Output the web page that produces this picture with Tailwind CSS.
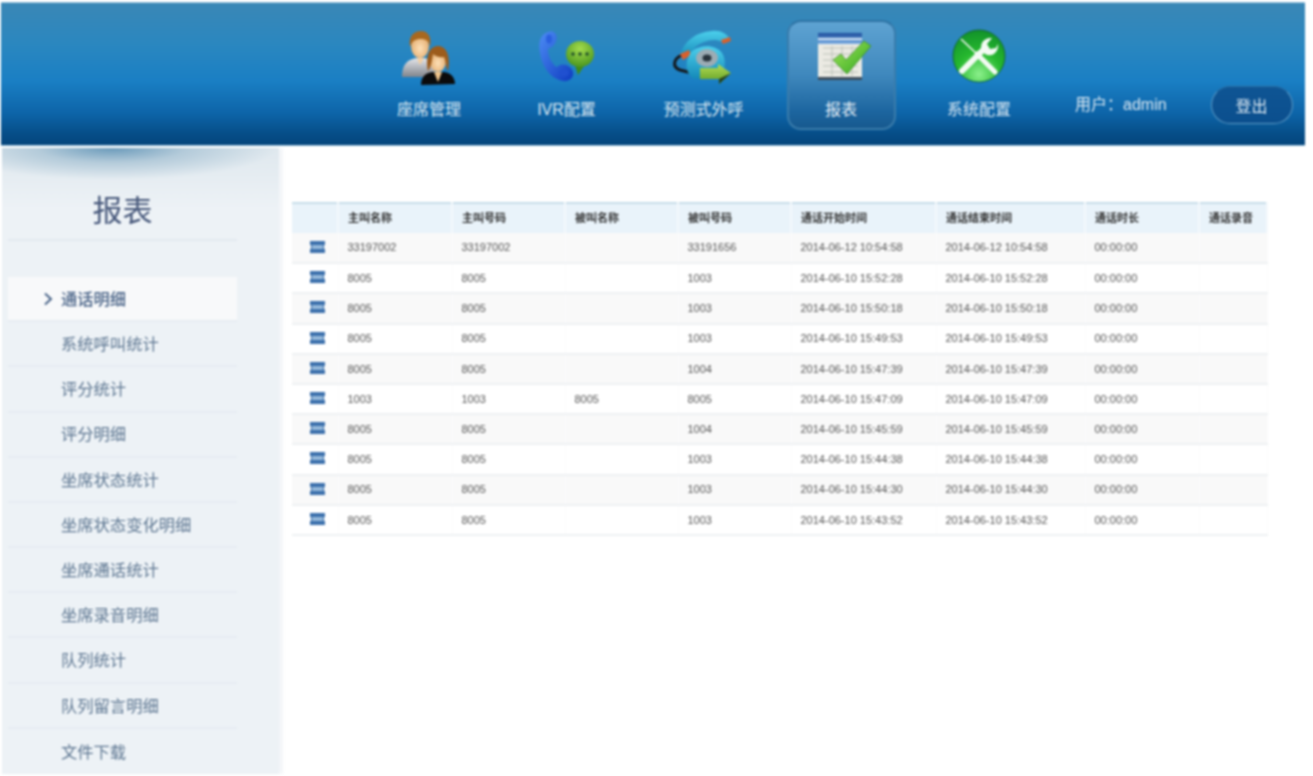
<!DOCTYPE html>
<html lang="zh-CN">
<head>
    <meta charset="UTF-8">
    <meta name="viewport" content="width=device-width, initial-scale=1.0">
    <title>报表</title>
    <script src="https://cdn.jsdelivr.net/npm/@tailwindcss/browser@4"></script>
</head>
<body class="bg-white font-['Liberation_Sans','Noto_Sans_CJK_SC',sans-serif] overflow-hidden">
<div class="w-[1313px] h-[776px] pt-[2px] overflow-hidden blur-[0.8px]">

    <!-- Header -->
    <header class="ml-[1px] w-[1304px] h-[144px] flex pl-[359px] pt-[15px] border-y border-[#9cc4dc] bg-[linear-gradient(to_bottom,#3a87b6_0%,#2a87c0_30%,#1a7fc4_55%,#0d64a8_78%,#064e88_92%,#05457c_100%)] text-[#dbe8f2]">
        <nav class="flex">
            <a class="w-[138px] flex justify-center">
                <div class="w-[108px] h-[110px] flex flex-col items-center pt-[11px]">
                    <svg width="60" height="56" viewBox="0 0 60 56">
                        <defs>
                            <linearGradient id="silver" x1="0" y1="0" x2="0" y2="1"><stop offset="0" stop-color="#e4e6ea"/><stop offset="1" stop-color="#80848c"/></linearGradient>
                            <radialGradient id="skin" cx=".5" cy=".6" r=".6"><stop offset="0" stop-color="#fde0b8"/><stop offset="1" stop-color="#e2a868"/></radialGradient>
                        </defs>
                        <path d="M3 48 C3 34 10 30 18 29 L25 29 C32 30 36 34 36 48 Z" fill="url(#silver)"/>
                        <path d="M18 29 L21 36 L25 29 Z" fill="#f4cfa0"/>
                        <ellipse cx="21" cy="17" rx="9" ry="12" fill="url(#skin)"/>
                        <path d="M11 18 C9 6 16 2 22 2 C29 2 33 8 31 18 C30 12 27 10 22 10 C16 10 13 12 11 18 Z" fill="#a8681f"/>
                        <path d="M22 56 C22 46 29 43 34 43 L44 43 C50 43 56 47 56 55 Z" fill="#0b0b0c"/>
                        <path d="M35 43 L39 53 L43 43 Z" fill="#f0c48c"/>
                        <ellipse cx="39" cy="32" rx="8" ry="11" fill="url(#skin)"/>
                        <path d="M29 42 C26 26 31 17 39 17 C47 17 52 26 49 42 C47 40 47 32 45 28 C41 29 36 27 34 25 C33 31 32 39 29 42 Z" fill="#9c5c1c"/>
                    </svg>
                    <span class="mt-[13px] text-[16px] leading-[24px]">座席管理</span>
                </div>
            </a>
            <a class="w-[137px] flex justify-center">
                <div class="w-[108px] h-[110px] flex flex-col items-center pt-[11px]">
                    <svg width="60" height="56" viewBox="0 0 60 56">
                        <defs>
                            <linearGradient id="handset" x1="0" y1="0" x2="1" y2="1"><stop offset="0" stop-color="#4c8cf4"/><stop offset="1" stop-color="#0f3cc0"/></linearGradient>
                            <radialGradient id="bubble" cx=".5" cy=".3" r=".8"><stop offset="0" stop-color="#a4dc4c"/><stop offset="1" stop-color="#3e8c18"/></radialGradient>
                        </defs>
                        <path d="M11 3 C3 5 1 14 3 24 C5 38 14 50 26 52 C33 53 37 48 36 43 C35 38 28 34 23 36 C21 37 20 39 18 37 C14 33 11 26 11 21 C11 19 14 19 16 17 C20 13 21 7 18 4 C16 2 13 2 11 3 Z" fill="url(#handset)"/>
                        <ellipse cx="27" cy="44" rx="5" ry="3.5" fill="#2050d0"/>
                        <ellipse cx="12" cy="10" rx="3" ry="4.5" fill="#2a60e0"/>
                        <path d="M38 36 L41 46 L47 37 Z" fill="#3e8c18"/>
                        <ellipse cx="43" cy="25" rx="14" ry="13" fill="url(#bubble)"/>
                        <circle cx="36" cy="25" r="1.7" fill="#1e4c28"/>
                        <circle cx="43" cy="25" r="1.7" fill="#1e4c28"/>
                        <circle cx="50" cy="25" r="1.7" fill="#1e4c28"/>
                    </svg>
                    <span class="mt-[13px] text-[16px] leading-[24px]">IVR配置</span>
                </div>
            </a>
            <a class="w-[137px] flex justify-center">
                <div class="w-[108px] h-[110px] flex flex-col items-center pt-[11px]">
                    <svg width="64" height="56" viewBox="0 0 64 56">
                        <defs>
                            <linearGradient id="teal" x1="0" y1="0" x2="0" y2="1"><stop offset="0" stop-color="#4cd0ec"/><stop offset="1" stop-color="#1488b8"/></linearGradient>
                            <linearGradient id="arrow" x1="0" y1="0" x2="0" y2="1"><stop offset="0" stop-color="#b4dc54"/><stop offset="1" stop-color="#5c9c24"/></linearGradient>
                        </defs>
                        <path d="M10 26 C1 30 0 38 8 41 L20 44" fill="none" stroke="#14181c" stroke-width="3"/>
                        <path d="M8 26 C12 12 24 3 40 2 C48 1 54 4 58 10 L50 13 C44 10 38 11 32 13 C24 16 19 21 17 29 Z" fill="url(#teal)"/>
                        <path d="M49 11 L58 8 L59 12 L51 15 Z" fill="#d8602c"/>
                        <path d="M8 25 L17 21 L19 26 L11 31 Z" fill="#d8602c"/>
                        <path d="M20 22 C30 15 44 16 50 24 C54 30 54 40 48 48 L22 50 C12 44 13 30 20 22 Z" fill="url(#teal)"/>
                        <ellipse cx="35" cy="29" rx="11" ry="9" fill="#9cacb4"/>
                        <ellipse cx="35" cy="29" rx="4.5" ry="3.5" fill="#28343c"/>
                        <path d="M28 39 L46 39 L46 35 L59 44 L47 55 L47 50 L28 50 Z" fill="url(#arrow)"/>
                        <path d="M59 44 L47 55 L47 50 Z" fill="#24401a"/>
                    </svg>
                    <span class="mt-[13px] text-[16px] leading-[24px]">预测式外呼</span>
                </div>
            </a>
            <a class="w-[138px] flex justify-center">
                <div class="w-[109px] h-[110px] mt-[2px] flex flex-col items-center pt-[8px] rounded-[14px] border-2 border-[#3a7cab] border-t-[#2f73a4] bg-[linear-gradient(to_bottom,#5ea3d2_0%,#3f88bd_50%,#1c659f_85%,#17598f_100%)]">
                    <svg class="ml-[6px]" width="60" height="54" viewBox="0 0 60 54">
                        <defs>
                            <linearGradient id="sheetTop" x1="0" y1="0" x2="0" y2="1"><stop offset="0" stop-color="#1c4c9c"/><stop offset="1" stop-color="#7cb0e4"/></linearGradient>
                            <linearGradient id="check" x1="0" y1="0" x2="1" y2="1"><stop offset="0" stop-color="#a4e85c"/><stop offset="1" stop-color="#2ca41c"/></linearGradient>
                        </defs>
                        <rect x="4" y="3" width="44" height="46" fill="#ebeae3"/>
                        <rect x="4" y="47" width="44" height="3" fill="#3c4c5c"/>
                        <rect x="4" y="3" width="44" height="11" fill="url(#sheetTop)"/>
                        <rect x="4" y="8" width="44" height="2" fill="#d8e8f8"/>
                        <path d="M9 18 H44 M9 24 H44 M9 30 H44 M9 36 H44 M9 42 H44 M18 16 V46 M28 16 V46 M38 16 V46" stroke="#bcc0b8" stroke-width="1"/>
                        <path d="M19 30 L27 24 L32 30 L50 11 L57 16 L33 44 Z" fill="url(#check)" stroke="#3c8c2c" stroke-width=".8"/>
                    </svg>
                    <span class="mt-[14px] text-[16px] leading-[24px] text-[#e6eff6]">报表</span>
                </div>
            </a>
            <a class="w-[138px] flex justify-center">
                <div class="w-[108px] h-[110px] flex flex-col items-center pt-[11px]">
                    <svg width="60" height="56" viewBox="0 0 60 56">
                        <defs>
                            <radialGradient id="ball" cx=".5" cy=".85" r=".85"><stop offset="0" stop-color="#8cf08c"/><stop offset=".5" stop-color="#26b82e"/><stop offset="1" stop-color="#12922a"/></radialGradient>
                        </defs>
                        <circle cx="30" cy="27" r="26" fill="url(#ball)" stroke="#0d5c25" stroke-width=".8"/>
                        <path d="M12 10 L48 44" stroke="#f4fbf4" stroke-width="1.6"/>
                        <path d="M28 25 L46 43" stroke="#f4fbf4" stroke-width="5" stroke-linecap="round"/>
                        <path d="M13 42 L35 20" stroke="#f4fbf4" stroke-width="6" stroke-linecap="round"/>
                        <path d="M33 22 C30 15 35 8 43 9 L38 15 L41 20 L47 19 L49 15 C50 23 43 29 36 25 Z" fill="#f4fbf4"/>
                    </svg>
                    <span class="mt-[13px] text-[16px] leading-[24px]">系统配置</span>
                </div>
            </a>
        </nav>
        <span class="ml-[27px] mt-[75px] h-[24px] text-[16px] leading-[24px] text-[#dbe8f2]">用户：admin</span>
        <button class="ml-[44px] mt-[68px] w-[82px] h-[38px] pt-[4px] rounded-full border border-[#5f9cc6] border-t-[#2a6da2] bg-[linear-gradient(to_bottom,#0f5594,#0b4f8e)] text-[16px] text-[#dbe8f2]">登出</button>
    </header>

    <div class="flex mt-[2px]">
        <!-- Sidebar -->
        <aside class="ml-[2px] w-[277px] h-[626px] flex flex-col shadow-[4px_0_2px_#f4f6f9] bg-[radial-gradient(ellipse_165px_32px_at_110px_0,#6a9aba_0%,#b4cbda_45%,transparent_100%),linear-gradient(to_bottom,#dfe8ee,#edf2f6_60px)]">
            <h2 class="h-[97px] mx-[6px] mr-[42px] flex items-center justify-center pt-[36px] border-b-2 border-[#e2e9f0] text-[30px] leading-none text-[#46577a]">报表</h2>
            <ul class="mt-[36px] ml-[6px] w-[229px] text-[16.3px] text-[#5d7691] [&>li]:h-[45.2px] [&>li]:flex [&>li]:items-center [&>li]:pl-[53px] [&>li]:pt-[1px] [&>li]:border-b-2 [&>li]:border-[#e6ecf2]">
                <li class="relative bg-[#f8f9fa] font-medium text-[#4a6488]">
                    <svg class="absolute left-[35px] top-[15px]" width="10" height="14" viewBox="0 0 10 14"><path d="M2 1.5 L8 7 L2 12.5" fill="none" stroke="#4a6488" stroke-width="2"/></svg>
                    通话明细
                </li>
                <li>系统呼叫统计</li>
                <li>评分统计</li>
                <li>评分明细</li>
                <li>坐席状态统计</li>
                <li>坐席状态变化明细</li>
                <li>坐席通话统计</li>
                <li>坐席录音明细</li>
                <li>队列统计</li>
                <li>队列留言明细</li>
                <li class="border-b-0!">文件下载</li>
            </ul>
        </aside>

        <!-- Report table -->
        <main class="ml-[13px] mt-[54px] w-[975px]">
            <table class="w-full table-fixed border-collapse text-[11px] text-[#555] [&_td]:h-[30.2px] [&_td]:pl-[9px] [&_td]:border-b-2 [&_td]:border-[#eef1f3] [&_td]:border-r [&_td]:border-r-[#fbfbfc]">
                <colgroup>
                    <col class="w-[46px]"><col class="w-[114px]"><col class="w-[113px]"><col class="w-[113px]"><col class="w-[113px]"><col class="w-[145px]"><col class="w-[149px]"><col class="w-[114px]"><col class="w-[68px]">
                </colgroup>
                <thead>
                    <tr class="h-[30px] bg-[#e9f3fa] border-t-2 border-[#c7dde9] text-left text-[#333] [&_th]:pl-[9px] [&_th]:font-bold [&_th]:border-r-2 [&_th]:border-r-[#f4f9fc]">
                        <th></th><th>主叫名称</th><th>主叫号码</th><th>被叫名称</th><th>被叫号码</th><th>通话开始时间</th><th>通话结束时间</th><th>通话时长</th><th>通话录音</th>
                    </tr>
                </thead>
                <tbody class="[&>tr:nth-child(odd)]:bg-[#f9f9f9] [&_svg]:ml-[9px] [&_svg]:-translate-y-[1px]">
                    <tr><td><svg width="15" height="12" viewBox="0 0 15 12"><path d="M0 0 H15 V4 H14 V8 H15 V12 H0 V8 H1 V4 H0 Z" fill="#3c70ac"/><rect x="2" y="4" width="11" height="4" fill="#94b8da"/></svg></td><td>33197002</td><td>33197002</td><td></td><td>33191656</td><td>2014-06-12 10:54:58</td><td>2014-06-12 10:54:58</td><td>00:00:00</td><td></td></tr>
                    <tr><td><svg width="15" height="12" viewBox="0 0 15 12"><path d="M0 0 H15 V4 H14 V8 H15 V12 H0 V8 H1 V4 H0 Z" fill="#3c70ac"/><rect x="2" y="4" width="11" height="4" fill="#94b8da"/></svg></td><td>8005</td><td>8005</td><td></td><td>1003</td><td>2014-06-10 15:52:28</td><td>2014-06-10 15:52:28</td><td>00:00:00</td><td></td></tr>
                    <tr><td><svg width="15" height="12" viewBox="0 0 15 12"><path d="M0 0 H15 V4 H14 V8 H15 V12 H0 V8 H1 V4 H0 Z" fill="#3c70ac"/><rect x="2" y="4" width="11" height="4" fill="#94b8da"/></svg></td><td>8005</td><td>8005</td><td></td><td>1003</td><td>2014-06-10 15:50:18</td><td>2014-06-10 15:50:18</td><td>00:00:00</td><td></td></tr>
                    <tr><td><svg width="15" height="12" viewBox="0 0 15 12"><path d="M0 0 H15 V4 H14 V8 H15 V12 H0 V8 H1 V4 H0 Z" fill="#3c70ac"/><rect x="2" y="4" width="11" height="4" fill="#94b8da"/></svg></td><td>8005</td><td>8005</td><td></td><td>1003</td><td>2014-06-10 15:49:53</td><td>2014-06-10 15:49:53</td><td>00:00:00</td><td></td></tr>
                    <tr><td><svg width="15" height="12" viewBox="0 0 15 12"><path d="M0 0 H15 V4 H14 V8 H15 V12 H0 V8 H1 V4 H0 Z" fill="#3c70ac"/><rect x="2" y="4" width="11" height="4" fill="#94b8da"/></svg></td><td>8005</td><td>8005</td><td></td><td>1004</td><td>2014-06-10 15:47:39</td><td>2014-06-10 15:47:39</td><td>00:00:00</td><td></td></tr>
                    <tr><td><svg width="15" height="12" viewBox="0 0 15 12"><path d="M0 0 H15 V4 H14 V8 H15 V12 H0 V8 H1 V4 H0 Z" fill="#3c70ac"/><rect x="2" y="4" width="11" height="4" fill="#94b8da"/></svg></td><td>1003</td><td>1003</td><td>8005</td><td>8005</td><td>2014-06-10 15:47:09</td><td>2014-06-10 15:47:09</td><td>00:00:00</td><td></td></tr>
                    <tr><td><svg width="15" height="12" viewBox="0 0 15 12"><path d="M0 0 H15 V4 H14 V8 H15 V12 H0 V8 H1 V4 H0 Z" fill="#3c70ac"/><rect x="2" y="4" width="11" height="4" fill="#94b8da"/></svg></td><td>8005</td><td>8005</td><td></td><td>1004</td><td>2014-06-10 15:45:59</td><td>2014-06-10 15:45:59</td><td>00:00:00</td><td></td></tr>
                    <tr><td><svg width="15" height="12" viewBox="0 0 15 12"><path d="M0 0 H15 V4 H14 V8 H15 V12 H0 V8 H1 V4 H0 Z" fill="#3c70ac"/><rect x="2" y="4" width="11" height="4" fill="#94b8da"/></svg></td><td>8005</td><td>8005</td><td></td><td>1003</td><td>2014-06-10 15:44:38</td><td>2014-06-10 15:44:38</td><td>00:00:00</td><td></td></tr>
                    <tr><td><svg width="15" height="12" viewBox="0 0 15 12"><path d="M0 0 H15 V4 H14 V8 H15 V12 H0 V8 H1 V4 H0 Z" fill="#3c70ac"/><rect x="2" y="4" width="11" height="4" fill="#94b8da"/></svg></td><td>8005</td><td>8005</td><td></td><td>1003</td><td>2014-06-10 15:44:30</td><td>2014-06-10 15:44:30</td><td>00:00:00</td><td></td></tr>
                    <tr><td><svg width="15" height="12" viewBox="0 0 15 12"><path d="M0 0 H15 V4 H14 V8 H15 V12 H0 V8 H1 V4 H0 Z" fill="#3c70ac"/><rect x="2" y="4" width="11" height="4" fill="#94b8da"/></svg></td><td>8005</td><td>8005</td><td></td><td>1003</td><td>2014-06-10 15:43:52</td><td>2014-06-10 15:43:52</td><td>00:00:00</td><td></td></tr>
                </tbody>
            </table>
        </main>
    </div>
</div>
</body>
</html>
